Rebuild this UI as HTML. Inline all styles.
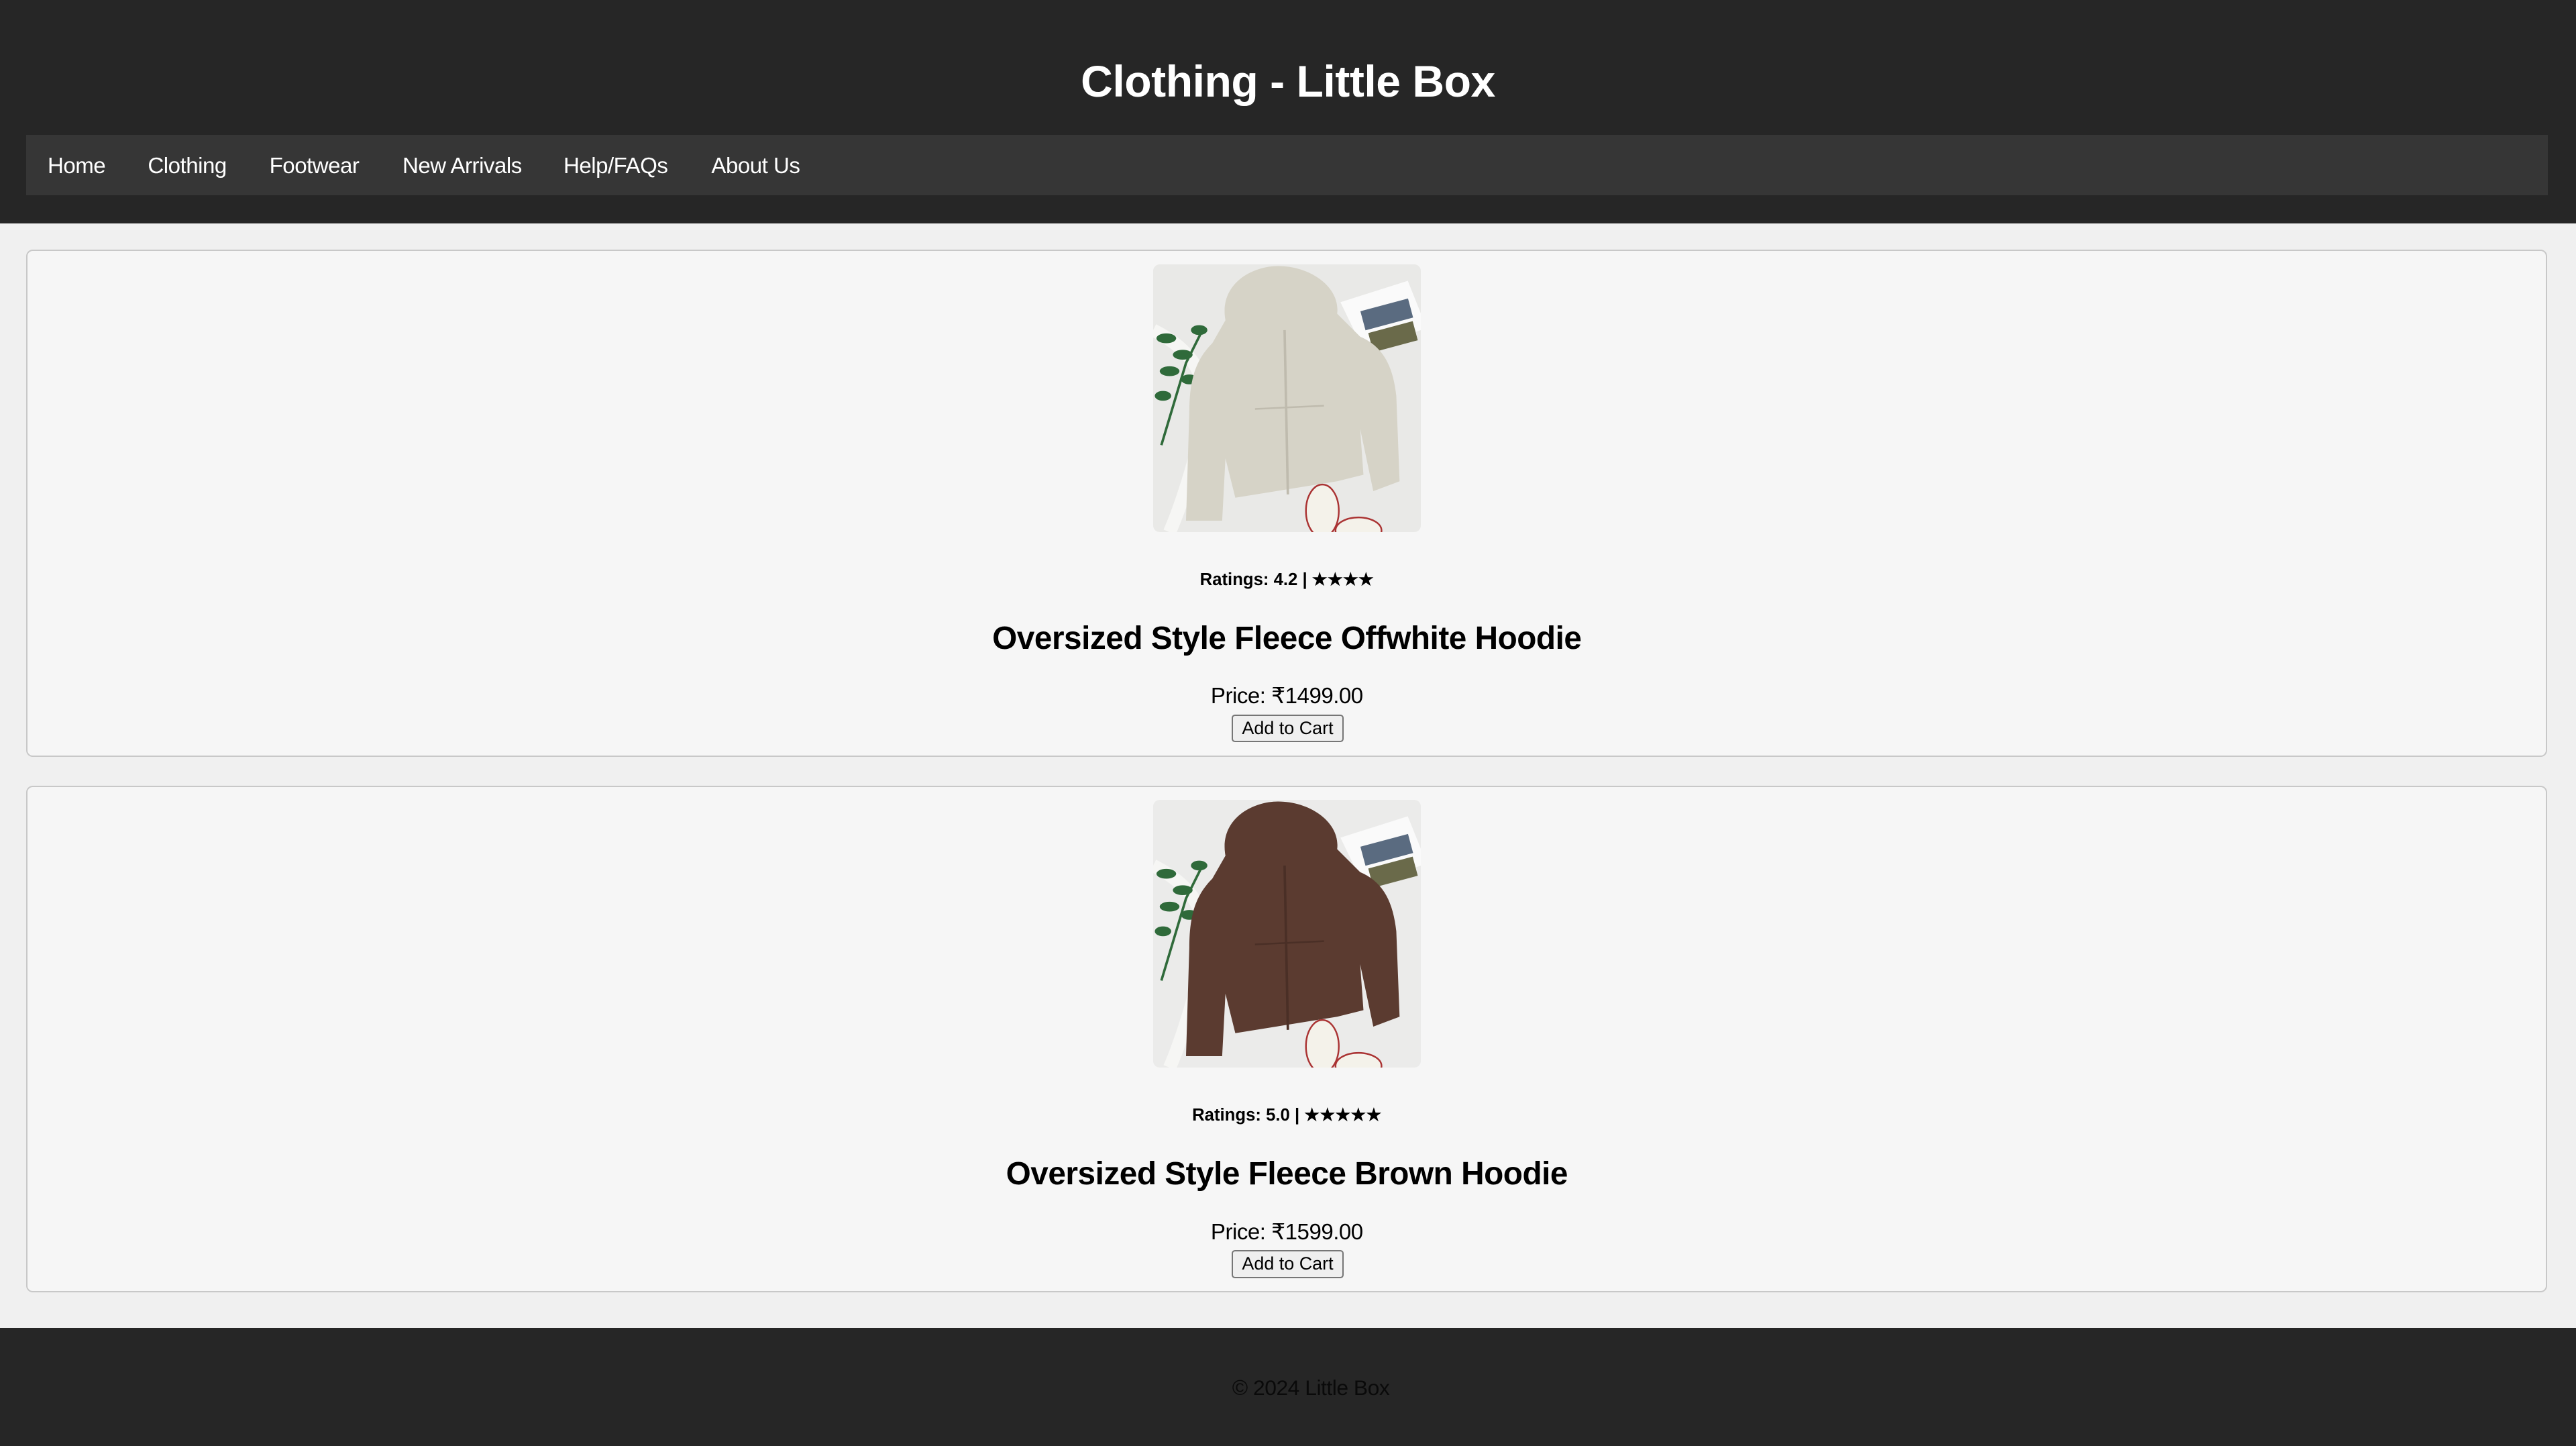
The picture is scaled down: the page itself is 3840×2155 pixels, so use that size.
<!DOCTYPE html>
<html><head><meta charset="utf-8"><style>
html,body{margin:0;padding:0;background:#f0f0f0;overflow:hidden}
#w{zoom:2.44898;width:1568px;height:880px;position:relative;font-family:"Liberation Sans",Arial,sans-serif;background:#f0f0f0}
header{position:absolute;left:0;top:0;width:1568px;height:136px;background:#262626}
h1{position:absolute;left:0;right:0;top:34px;margin:0;text-align:center;color:#fff;font-size:27px;line-height:32px;font-weight:bold;letter-spacing:-0.2px}
nav{position:absolute;left:16px;top:82px;width:1535px;height:37px;background:#363636}
nav span{position:absolute;top:11px;color:#fff;font-size:13.5px;line-height:16px;letter-spacing:-0.2px}
.card{position:absolute;left:16px;width:1533px;height:307px;background:#f6f6f6;border:1px solid #c8c8c8;border-radius:4px}
.img{position:absolute;left:685px;top:8px;width:163px;height:163px;border-radius:4px;overflow:hidden}
.rat{position:absolute;left:0;right:0;top:193px;text-align:center;font-size:10.5px;font-weight:bold;line-height:14px}
.tt{position:absolute;left:0;right:0;top:224px;text-align:center;font-size:19.5px;font-weight:bold;line-height:24px;letter-spacing:-0.2px}
.pr{position:absolute;left:0;right:0;top:263px;text-align:center;font-size:13.5px;line-height:16px;letter-spacing:-0.2px}
.bt{position:absolute;left:733px;top:282px;width:68px;height:17px;border:1px solid #767676;border-radius:2px;background:#efefef;font-size:11px;text-align:center;box-sizing:border-box;line-height:15px}
footer{position:absolute;left:0;top:808px;width:1568px;height:72px;background:#262626}
footer span{position:absolute;left:750px;top:29px;font-size:13px;line-height:15px;color:#0a0a0a;letter-spacing:-0.2px}
</style></head><body><div id="w">
<header><h1>Clothing - Little Box</h1>
<nav><span style="left:13px">Home</span><span style="left:74px">Clothing</span><span style="left:148px">Footwear</span><span style="left:229px">New Arrivals</span><span style="left:327px">Help/FAQs</span><span style="left:417px">About Us</span></nav></header>

<div class="card" style="top:152px">
<div class="img"><svg width="163" height="163" viewBox="0 0 163 163">
<rect width="163" height="163" fill="#e9e9e7"/>
<path d="M0,40 Q40,60 30,100 T10,163" stroke="#f6f6f4" stroke-width="8" fill="none"/>
<g fill="#2f6a3a"><ellipse cx="8" cy="45" rx="6" ry="3"/><ellipse cx="18" cy="55" rx="6" ry="3"/><ellipse cx="10" cy="65" rx="6" ry="3"/><ellipse cx="28" cy="40" rx="5" ry="3"/><ellipse cx="22" cy="70" rx="5" ry="3"/><ellipse cx="6" cy="80" rx="5" ry="3"/></g>
<path d="M5,110 L20,60 L30,40" stroke="#2f6a3a" stroke-width="1.5" fill="none"/>
<path d="M114,23 L155,10 L163,30 L163,40 L128,52 Z" fill="#fafafa"/>
<rect x="127" y="25" width="30" height="12" fill="#5a6b80" transform="rotate(-15 140 30)"/>
<rect x="132" y="38" width="28" height="12" fill="#6a6a4a" transform="rotate(-15 146 44)"/>
<path d="M44,34 C40,12 60,1 76,1 C96,1 114,14 112,30 L126,44 C140,50 146,62 148,80 L150,132 L134,138 L126,100 L128,128 L112,132 L50,142 L44,118 L42,156 L20,156 L22,90 C22,70 26,58 36,48 Z" fill="#d6d3c7"/>
<path d="M80,40 L82,140" stroke="#bfbbae" stroke-width="1.5"/>
<path d="M62,88 L104,86" stroke="#bfbbae" stroke-width="1"/>
<ellipse cx="103" cy="150" rx="10" ry="16" fill="#f4f2ea" stroke="#a33" stroke-width="1"/>
<ellipse cx="125" cy="162" rx="14" ry="8" fill="#f4f2ea" stroke="#a33" stroke-width="1"/>
</svg></div>
<div class="rat">Ratings: 4.2 | ★★★★</div>
<div class="tt">Oversized Style Fleece Offwhite Hoodie</div>
<div class="pr">Price: ₹1499.00</div>
<div class="bt">Add to Cart</div>
</div>

<div class="card" style="top:478px">
<div class="img"><svg width="163" height="163" viewBox="0 0 163 163">
<rect width="163" height="163" fill="#ebebea"/>
<path d="M0,40 Q40,60 30,100 T10,163" stroke="#f6f6f4" stroke-width="8" fill="none"/>
<g fill="#2f6a3a"><ellipse cx="8" cy="45" rx="6" ry="3"/><ellipse cx="18" cy="55" rx="6" ry="3"/><ellipse cx="10" cy="65" rx="6" ry="3"/><ellipse cx="28" cy="40" rx="5" ry="3"/><ellipse cx="22" cy="70" rx="5" ry="3"/><ellipse cx="6" cy="80" rx="5" ry="3"/></g>
<path d="M5,110 L20,60 L30,40" stroke="#2f6a3a" stroke-width="1.5" fill="none"/>
<path d="M114,23 L155,10 L163,30 L163,40 L128,52 Z" fill="#fafafa"/>
<rect x="127" y="25" width="30" height="12" fill="#5a6b80" transform="rotate(-15 140 30)"/>
<rect x="132" y="38" width="28" height="12" fill="#6a6a4a" transform="rotate(-15 146 44)"/>
<path d="M44,34 C40,12 60,1 76,1 C96,1 114,14 112,30 L126,44 C140,50 146,62 148,80 L150,132 L134,138 L126,100 L128,128 L112,132 L50,142 L44,118 L42,156 L20,156 L22,90 C22,70 26,58 36,48 Z" fill="#5b3b30"/>
<path d="M80,40 L82,140" stroke="#4a2f26" stroke-width="1.5"/>
<path d="M62,88 L104,86" stroke="#4a2f26" stroke-width="1"/>
<ellipse cx="103" cy="150" rx="10" ry="16" fill="#f4f2ea" stroke="#a33" stroke-width="1"/>
<ellipse cx="125" cy="162" rx="14" ry="8" fill="#f4f2ea" stroke="#a33" stroke-width="1"/>
</svg></div>
<div class="rat">Ratings: 5.0 | ★★★★★</div>
<div class="tt">Oversized Style Fleece Brown Hoodie</div>
<div class="pr">Price: ₹1599.00</div>
<div class="bt">Add to Cart</div>
</div>

<footer><span>© 2024 Little Box</span></footer>
</div></body></html>
